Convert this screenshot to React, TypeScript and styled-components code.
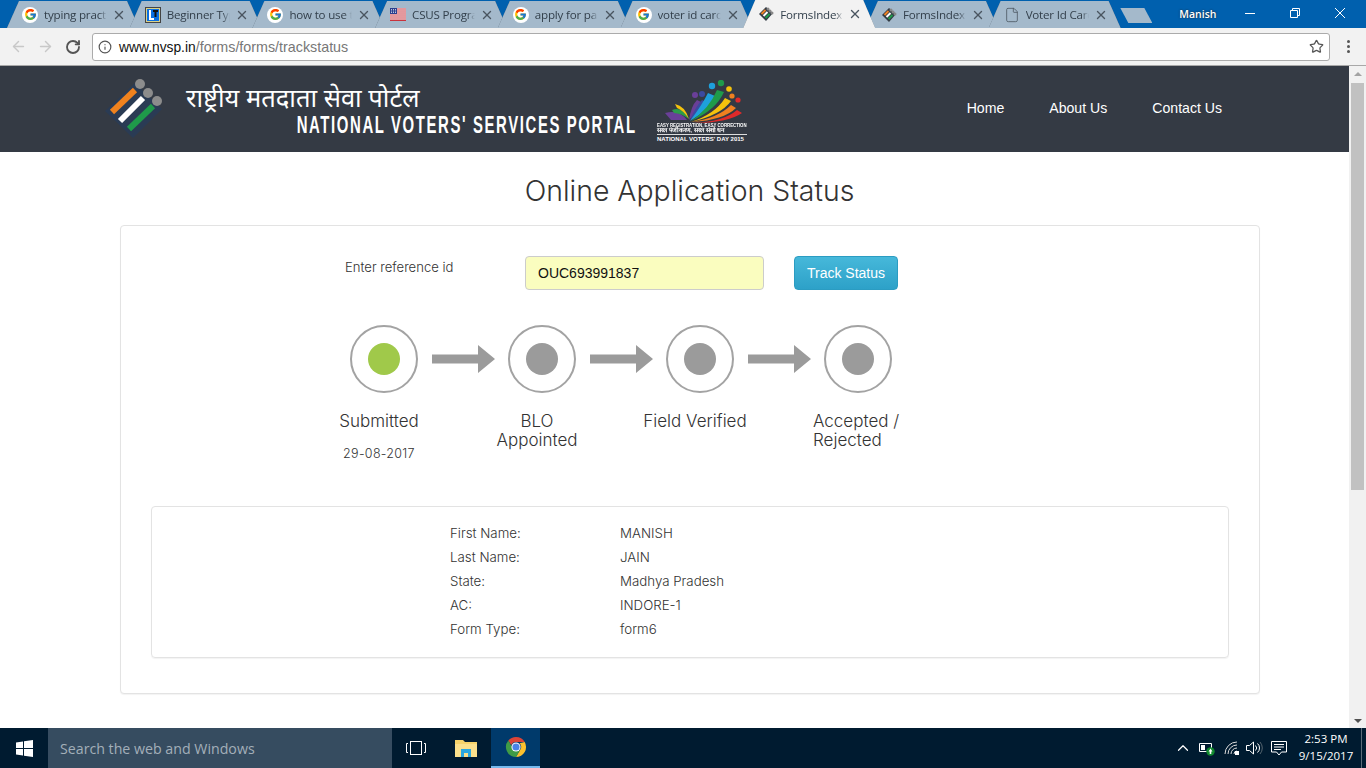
import { FcGoogle } from "react-icons/fc";
import { File, X, ArrowLeft, ArrowRight, RotateCw, Info, Star, ChevronUp } from "lucide-react";
import styled, { createGlobalStyle } from "styled-components";

const GlobalStyle = createGlobalStyle`
  html, body {
    margin: 0;
    padding: 0;
    height: 100%;
    overflow: hidden;
  }
  * { box-sizing: border-box; }
`;

const Screen = styled.div`
  display: flex;
  flex-direction: column;
  width: 1366px;
  height: 768px;
  font-family: "Open Sans", "Liberation Sans", sans-serif;
  background: #fff;
`;

const TabStrip = styled.div`
  display: flex;
  align-items: flex-end;
  height: 28px;
  padding-left: 7px;
  background: #0060ae;
  flex: none;
`;

const TabShell = styled.div<{ $active?: boolean }>`
  position: relative;
  z-index: ${(p) => (p.$active ? 2 : 1)};
  flex: none;
  width: 132px;
  margin-right: -9.3px;
  filter: drop-shadow(0 0 0.6px #51616f);
`;

const Tab = styled.div<{ $active?: boolean }>`
  display: flex;
  align-items: center;
  height: ${(p) => (p.$active ? "28px" : "27px")};
  padding: 0 13px 0 15px;
  background: ${(p) => (p.$active ? "#f2f2f2" : "#a4b9cb")};
  clip-path: polygon(12px 0, 120px 0, 132px 100%, 0 100%);
  color: #33404c;
`;

const TabIcon = styled.span`
  display: flex;
  align-items: center;
  justify-content: center;
  flex: none;
  width: 16px;
  height: 16px;
  margin-right: 6px;
`;

const GoogleBadge = styled(TabIcon)`
  background: #fff;
  border-radius: 50%;
`;

const TabTitle = styled.span`
  flex: 1;
  overflow: hidden;
  white-space: nowrap;
  font-size: 11.6px;
  letter-spacing: -0.2px;
  mask-image: linear-gradient(to right, #000 88%, transparent 100%);
`;

const TabClose = styled(X)`
  flex: none;
  margin-left: 5px;
  color: #4a5560;
`;

const NewTab = styled.div`
  width: 32px;
  height: 15px;
  margin: 0 0 5px 9px;
  background: #a4b9cb;
  clip-path: polygon(0 0, 24px 0, 32px 100%, 8px 100%);
  flex: none;
`;

const UserName = styled.div`
  width: 35px;
  margin-left: 27px;
  color: #fff;
  font-size: 10.5px;
  font-weight: 600;
  align-self: center;
  text-shadow: 0 0 2px #222;
  white-space: nowrap;
`;

const WindowButtons = styled.div`
  display: flex;
  align-items: center;
  margin-left: 31px;
  gap: 35px;
  align-self: center;
  margin-bottom: 2px;
  color: #fff;
`;

const Toolbar = styled.div`
  display: flex;
  align-items: center;
  flex: none;
  height: 38px;
  padding: 0 0 0 5px;
  background: #f2f2f2;
  border-bottom: 1px solid #a8a8a8;
`;

const NavIcon = styled.span<{ $dim?: boolean }>`
  display: flex;
  width: 27px;
  justify-content: center;
  color: ${(p) => (p.$dim ? "#c8c8c8" : "#555")};
`;

const Omnibox = styled.div`
  display: flex;
  align-items: center;
  width: 1238px;
  height: 28px;
  margin-left: 6px;
  padding: 0 5px 0 5px;
  background: #fff;
  border: 1px solid #ababab;
  border-radius: 3px;
`;

const Url = styled.span`
  flex: 1;
  margin-left: 7px;
  padding-top: 1px;
  color: #777;
  font-family: "Liberation Sans", Arial, sans-serif;
  font-size: 14.3px;
  b {
    font-weight: 400;
    font-size: 13.8px;
    color: #111;
  }
`;

const Kebab = styled.div`
  display: flex;
  flex-direction: column;
  gap: 2px;
  margin-left: 17px;
  i {
    width: 3px;
    height: 3px;
    background: #555;
    border-radius: 50%;
  }
`;

const Viewport = styled.div`
  display: flex;
  flex: 1;
  min-height: 0;
`;

const Page = styled.div`
  flex: 1;
  overflow: hidden;
  font-family: "Inter", "Liberation Sans", sans-serif;
  font-weight: 300;
  color: #333;
`;

const Scrollbar = styled.div`
  display: flex;
  flex-direction: column;
  align-items: center;
  width: 17px;
  padding: 6px 0 5px;
  background: #f1f1f1;
`;

const ScrollArrow = styled.div<{ $down?: boolean }>`
  width: 0;
  height: 0;
  border-left: 4px solid transparent;
  border-right: 4px solid transparent;
  ${(p) => (p.$down ? "border-top: 4px solid #505050;" : "border-bottom: 4px solid #a3a3a3;")}
`;

const ScrollThumb = styled.div`
  width: 13px;
  height: 407px;
  margin-top: 7px;
  background: #c1c1c1;
`;

const ScrollRest = styled.div`
  flex: 1;
`;

const SiteHeader = styled.header`
  display: flex;
  align-items: flex-start;
  height: 86px;
  padding: 8px 127px 0 104px;
  background: #343a44;
  color: #fff;
`;

const Brand = styled.div`
  display: flex;
  flex-direction: column;
  width: 449px;
  margin-left: 20px;
`;

const BrandHindi = styled.div`
  height: 33px;
  font-family: "Noto Sans", "Noto Sans Devanagari", "Liberation Sans", sans-serif;
  font-size: 25.5px;
  font-weight: 400;
  line-height: 46px;
  white-space: nowrap;
`;

const BrandEnglish = styled.div`
  align-self: flex-end;
  margin: 6px 0 0 0;
  font-family: "Liberation Sans", Arial, sans-serif;
  font-size: 23px;
  font-weight: 700;
  letter-spacing: 2.5px;
  line-height: 24px;
  white-space: nowrap;
  transform: translateX(2px) scaleX(0.648);
  transform-origin: right center;
`;

const DayLogo = styled.div`
  display: flex;
  flex-direction: column;
  width: 90px;
  margin: 6px 0 0 22px;
  font-family: "Liberation Sans", Arial, sans-serif;
  font-weight: 700;
  white-space: nowrap;
`;

const DayLine = styled.div<{ $squeeze: number }>`
  font-size: 6px;
  line-height: 5px;
  transform: scaleX(${(p) => p.$squeeze});
  transform-origin: left center;
`;

const DayRule = styled.div`
  height: 1px;
  margin: 1px 0 2px;
  background: #ddd;
`;

const HeaderNav = styled.nav`
  display: flex;
  gap: 45px;
  margin: 26px 0 0 auto;
  font-family: "Liberation Sans", Arial, sans-serif;
  font-size: 14.1px;
  font-weight: 400;
  line-height: 17px;
`;

const Heading = styled.h1`
  margin: 22px 0 17px;
  padding-left: 30px;
  text-align: center;
  font-size: 28.4px;
  font-weight: 300;
  line-height: 34px;
  height: 34px;
  color: #333;
`;

const Card = styled.section`
  width: 1140px;
  height: 469px;
  margin-left: 120px;
  padding: 30px 30px 0;
  background: #fff;
  border: 1px solid #e3e3e3;
  border-radius: 4px;
  box-shadow: 0 1px 1px rgba(0, 0, 0, 0.05);
`;

const TrackForm = styled.div`
  display: flex;
  align-items: flex-start;
  height: 34px;
  padding-left: 194px;
`;

const RefLabel = styled.label`
  width: 180px;
  padding-top: 3px;
  font-size: 13.1px;
  line-height: 16px;
  font-weight: 300;
`;

const RefInput = styled.input`
  width: 239px;
  height: 34px;
  padding: 0 12px;
  background: #fafdbf;
  border: 1px solid #ccc;
  border-radius: 4px;
  font-family: "Liberation Sans", Arial, sans-serif;
  font-size: 14px;
  color: #111;
`;

const TrackButton = styled.button`
  width: 104px;
  height: 34px;
  margin-left: 30px;
  background: linear-gradient(#46b8da, #2da1c8);
  border: 1px solid #2b9cc2;
  border-radius: 4px;
  font-family: "Liberation Sans", Arial, sans-serif;
  font-size: 14px;
  color: #fff;
`;

const Progress = styled.div`
  display: flex;
  align-items: center;
  margin: 35px 0 0 199px;
`;

const Ring = styled.div`
  display: flex;
  align-items: center;
  justify-content: center;
  flex: none;
  width: 68px;
  height: 68px;
  border: 2px solid #a3a3a3;
  border-radius: 50%;
`;

const Dot = styled.div<{ $done?: boolean }>`
  width: 32px;
  height: 32px;
  border-radius: 50%;
  background: ${(p) => (p.$done ? "#a0c94a" : "#9b9b9b")};
`;

const ArrowSlot = styled.div`
  display: flex;
  flex: none;
  width: 90px;
  padding-left: 14px;
`;

const StepLabels = styled.div`
  display: grid;
  grid-template-columns: repeat(4, 158px);
  height: 94px;
  margin: 19px 0 0 149px;
`;

const StepLabel = styled.div<{ $left?: boolean }>`
  padding-left: ${(p) => (p.$left ? "39px" : "0")};
  text-align: ${(p) => (p.$left ? "left" : "center")};
  font-size: 17px;
  font-weight: 300;
  line-height: 19px;
`;

const StepDate = styled.div`
  margin-top: 15px;
  font-size: 12.5px;
  letter-spacing: 0.3px;
  line-height: 16px;
`;

const DetailPanel = styled.div`
  width: 1078px;
  height: 152px;
  padding: 14px 0 0 298px;
  border: 1px solid #e3e3e3;
  border-radius: 4px;
  box-shadow: 0 1px 1px rgba(0, 0, 0, 0.05);
`;

const DetailRow = styled.div`
  display: grid;
  grid-template-columns: 170px 1fr;
  font-size: 13.3px;
  font-weight: 300;
  line-height: 24px;
`;

const Taskbar = styled.div`
  display: flex;
  align-items: stretch;
  flex: none;
  height: 40px;
  background: #001b30;
  color: #fff;
  font-family: "Open Sans", "Liberation Sans", sans-serif;
`;

const StartButton = styled.div`
  display: flex;
  align-items: center;
  justify-content: center;
  width: 48px;
`;

const SearchBox = styled.div`
  display: flex;
  align-items: center;
  width: 344px;
  padding-left: 12px;
  background: #364c60;
  color: #a3afb9;
  font-size: 14.2px;
`;

const TaskSlot = styled.div<{ $active?: boolean; $w: number }>`
  display: flex;
  align-items: center;
  justify-content: center;
  width: ${(p) => p.$w}px;
  background: ${(p) => (p.$active ? "#003a6b" : "transparent")};
  border-bottom: ${(p) => (p.$active ? "2px solid #76b9ed" : "none")};
`;

const Tray = styled.div`
  display: flex;
  align-items: stretch;
  margin-left: auto;
`;

const TraySlot = styled.div<{ $w: number }>`
  display: flex;
  align-items: center;
  justify-content: center;
  width: ${(p) => p.$w}px;
`;

const Clock = styled(TraySlot)`
  margin-right: 3px;
  padding-bottom: 2px;
  text-align: center;
  font-size: 11.5px;
  line-height: 17px;
  white-space: nowrap;
`;

const ShowDesktop = styled.div`
  width: 5px;
  border-left: 1px solid #5b6b78;
`;

const GoogleIcon = () => (
  <GoogleBadge>
    <FcGoogle size={13} />
  </GoogleBadge>
);

const VoterIcon = () => (
  <TabIcon>
    <svg width="16" height="16" viewBox="0 0 16 16">
      <path d="M8 1l7 6-7 8-7-7z" fill="#333b44" />
      <path d="M3.5 8l4-4" stroke="#ee8122" strokeWidth="2" />
      <path d="M5.5 10l4-4" stroke="#fff" strokeWidth="2" />
      <path d="M7.5 12l4-4" stroke="#1f9a4a" strokeWidth="2" />
      <circle cx="10" cy="3" r="1.5" fill="#888" />
      <circle cx="12" cy="5" r="1.5" fill="#888" />
      <circle cx="14" cy="7" r="1.5" fill="#888" />
    </svg>
  </TabIcon>
);

const TypingIcon = () => (
  <TabIcon>
    <svg width="16" height="16" viewBox="0 0 16 16">
      <rect x="0.5" y="0.5" width="15" height="15" fill="#d9d28a" stroke="#444" />
      <rect x="2" y="2" width="12" height="12" fill="#0a6fe0" />
      <path d="M4 3h2v8h3v2H4z" fill="#fff" />
      <path d="M8 3h5v2h-1.5v5H9.5V5H8z" fill="#111" />
    </svg>
  </TabIcon>
);

const FlagIcon = () => (
  <TabIcon>
    <svg width="16" height="13" viewBox="0 0 16 13">
      <rect width="16" height="13" fill="#fff" />
      <path d="M0 1h16M0 3h16M0 5h16M0 7h16M0 9h16M0 11h16M0 12.5h16" stroke="#c8323c" strokeWidth="1" />
      <rect width="7" height="6" fill="#2b3f8f" />
      <path d="M1 1.5h5M1 3h5M1 4.5h5" stroke="#fff" strokeWidth="0.7" strokeDasharray="1 1" />
    </svg>
  </TabIcon>
);

const DocIcon = () => (
  <TabIcon>
    <File size={16} strokeWidth={1.2} color="#4a5560" />
  </TabIcon>
);

const tabs = [
  { icon: <GoogleIcon />, title: "typing practice test" },
  { icon: <TypingIcon />, title: "Beginner Typing" },
  { icon: <GoogleIcon />, title: "how to use the" },
  { icon: <FlagIcon />, title: "CSUS Program" },
  { icon: <GoogleIcon />, title: "apply for pan" },
  { icon: <GoogleIcon />, title: "voter id card" },
  { icon: <VoterIcon />, title: "FormsIndex", active: true },
  { icon: <VoterIcon />, title: "FormsIndex" },
  { icon: <DocIcon />, title: "Voter Id Card" },
];

const details = [
  ["First Name:", "MANISH"],
  ["Last Name:", "JAIN"],
  ["State:", "Madhya Pradesh"],
  ["AC:", "INDORE-1"],
  ["Form Type:", "form6"],
];

const BallotLogo = () => (
  <svg width="62" height="64" viewBox="0 0 62 64">
    <path d="M1 37l30-28 27 26-29 29z" fill="#2a3b54" />
    <circle cx="36" cy="10" r="5" fill="#8c8c8c" />
    <circle cx="44" cy="19" r="5" fill="#8c8c8c" />
    <circle cx="53" cy="27" r="5" fill="#8c8c8c" />
    <path d="M8 38l23-22" stroke="#f0821e" strokeWidth="6" />
    <path d="M16 47l23-23" stroke="#fff" strokeWidth="6" />
    <path d="M25 55l24-23" stroke="#1f9a4a" strokeWidth="6" />
  </svg>
);

const Swoosh = () => (
  <svg width="90" height="43" viewBox="0 0 90 43">
    <path d="M8 33q14-4 22 7H14z" fill="#6a3f98" />
    <path d="M15 30q10-4 17 9-8-6-15-6z" fill="#2d9a4a" />
    <path d="M18 24q10 2 14 15-6-9-12-11z" fill="#f4c20d" />
    <path d="M32 40q2-14 8-20l4 2q-4 10-12 18z" fill="#6a3f98" />
    <path d="M33 40q6-14 12-20l4 2q-4 12-16 18z" fill="#3b4aa0" />
    <path d="M33 41q12-16 18-28l7 3q-6 14-25 25z" fill="#1ea0dc" />
    <path d="M34 41q18-12 26-31l7 2q-8 18-33 29z" fill="#1f9a4a" />
    <path d="M34 42q24-8 34-24l6 3q-10 14-40 21z" fill="#f4c20d" />
    <path d="M35 42q26-4 39-17l5 3q-12 12-44 14z" fill="#f08020" />
    <path d="M36 43q30-1 44-13l5 3q-14 10-49 10z" fill="#e02a2a" />
    <circle cx="38" cy="15" r="3" fill="#6a3f98" />
    <circle cx="45" cy="14" r="3" fill="#3b4aa0" />
    <circle cx="55" cy="6" r="3.2" fill="#1ea0dc" />
    <circle cx="64" cy="3" r="3.2" fill="#1f9a4a" />
    <circle cx="72" cy="9" r="2.8" fill="#f4c20d" />
    <circle cx="75" cy="16" r="2.6" fill="#f08020" />
    <circle cx="81" cy="20" r="2.6" fill="#e02a2a" />
  </svg>
);

const StepArrow = () => (
  <svg width="63" height="28" viewBox="0 0 63 28">
    <path d="M0 9.5h46V0l17 14-17 14v-9.5H0z" fill="#9b9b9b" />
  </svg>
);

const ChromeIcon = () => (
  <svg width="22" height="22" viewBox="0 0 24 24">
    <path d="M12 1a11 11 0 0 1 9.5 5.5H12a5.5 5.5 0 0 0-5.2 3.6L3.6 5A11 11 0 0 1 12 1z" fill="#db4437" />
    <path d="M21.5 6.5A11 11 0 0 1 12 23l4.7-8.2A5.5 5.5 0 0 0 16 8z" fill="#fbc02d" />
    <path d="M3.6 5l4.8 8.3A5 5 0 0 0 16.5 15L12 23A11 11 0 0 1 3.6 5z" fill="#3f9b46" />
    <circle cx="12" cy="12" r="5" fill="#fff" />
    <circle cx="12" cy="12" r="3.9" fill="#4a84e8" />
  </svg>
);

export default function App() {
  return (
    <Screen>
      <GlobalStyle />
      <TabStrip>
        {tabs.map((t, i) => (
          <TabShell key={i} $active={t.active}>
            <Tab $active={t.active}>
              {t.icon}
              <TabTitle>{t.title}</TabTitle>
              <TabClose size={14} strokeWidth={2.4} />
            </Tab>
          </TabShell>
        ))}
        <NewTab />
        <UserName>Manish</UserName>
        <WindowButtons>
          <svg width="10" height="10" viewBox="0 0 10 10">
            <path d="M0 5.5h10" stroke="#fff" />
          </svg>
          <svg width="10" height="10" viewBox="0 0 10 10" fill="none" stroke="#fff">
            <path d="M.5 2.5h7v7h-7zM2.5 2.5v-2h7v7h-2" />
          </svg>
          <svg width="10" height="10" viewBox="0 0 10 10">
            <path d="M0 0l10 10M10 0L0 10" stroke="#fff" />
          </svg>
        </WindowButtons>
      </TabStrip>
      <Toolbar>
        <NavIcon $dim>
          <ArrowLeft size={17} />
        </NavIcon>
        <NavIcon $dim>
          <ArrowRight size={17} />
        </NavIcon>
        <NavIcon>
          <RotateCw size={16} strokeWidth={2.8} />
        </NavIcon>
        <Omnibox>
          <Info size={14} color="#555" strokeWidth={2} />
          <Url>
            <b>www.nvsp.in</b>/forms/forms/trackstatus
          </Url>
          <Star size={15} color="#555" strokeWidth={2} />
        </Omnibox>
        <Kebab>
          <i />
          <i />
          <i />
        </Kebab>
      </Toolbar>
      <Viewport>
        <Page>
          <SiteHeader>
            <BallotLogo />
            <Brand>
              <BrandHindi lang="hi">राष्ट्रीय मतदाता सेवा पोर्टल</BrandHindi>
              <BrandEnglish>NATIONAL VOTERS' SERVICES PORTAL</BrandEnglish>
            </Brand>
            <DayLogo>
              <Swoosh />
              <DayLine $squeeze={0.72}>EASY REGISTRATION, EASY CORRECTION</DayLine>
              <DayLine lang="hi" $squeeze={1.05}>सरल पंजीकरण, सरल संशोधन</DayLine>
              <DayRule />
              <DayLine $squeeze={1}>NATIONAL VOTERS' DAY 2015</DayLine>
            </DayLogo>
            <HeaderNav>
              <span>Home</span>
              <span>About Us</span>
              <span>Contact Us</span>
            </HeaderNav>
          </SiteHeader>
          <Heading>Online Application Status</Heading>
          <Card>
            <TrackForm>
              <RefLabel>Enter reference id</RefLabel>
              <RefInput defaultValue="OUC693991837" />
              <TrackButton>Track Status</TrackButton>
            </TrackForm>
            <Progress>
              <Ring>
                <Dot $done />
              </Ring>
              <ArrowSlot>
                <StepArrow />
              </ArrowSlot>
              <Ring>
                <Dot />
              </Ring>
              <ArrowSlot>
                <StepArrow />
              </ArrowSlot>
              <Ring>
                <Dot />
              </Ring>
              <ArrowSlot>
                <StepArrow />
              </ArrowSlot>
              <Ring>
                <Dot />
              </Ring>
            </Progress>
            <StepLabels>
              <StepLabel>
                Submitted
                <StepDate>29-08-2017</StepDate>
              </StepLabel>
              <StepLabel>
                BLO
                <br />
                Appointed
              </StepLabel>
              <StepLabel>Field Verified</StepLabel>
              <StepLabel $left>
                Accepted /
                <br />
                Rejected
              </StepLabel>
            </StepLabels>
            <DetailPanel>
              {details.map(([k, v]) => (
                <DetailRow key={k}>
                  <span>{k}</span>
                  <span>{v}</span>
                </DetailRow>
              ))}
            </DetailPanel>
          </Card>
        </Page>
        <Scrollbar>
          <ScrollArrow />
          <ScrollThumb />
          <ScrollRest />
          <ScrollArrow $down />
        </Scrollbar>
      </Viewport>
      <Taskbar>
        <StartButton>
          <svg width="17" height="17" viewBox="0 0 17 17">
            <path d="M0 2.5l7-1v6.5H0zM8 1.3L17 0v8H8zM0 9h7v6.5l-7-1zM8 9h9v8l-9-1.3z" fill="#fff" />
          </svg>
        </StartButton>
        <SearchBox>Search the web and Windows</SearchBox>
        <TaskSlot $w={48}>
          <svg width="20" height="14" viewBox="0 0 20 14" fill="none" stroke="#fff">
            <rect x="4.5" y="0.5" width="11" height="13" />
            <path d="M2 2.5H.5v9H2M18 2.5h1.5v9H18" />
          </svg>
        </TaskSlot>
        <TaskSlot $w={51}>
          <svg width="22" height="18" viewBox="0 0 22 18">
            <path d="M0 1h8l2 2h12v15H0z" fill="#f6d36b" />
            <path d="M0 5h22v13H0z" fill="#fbe08c" />
            <path d="M6 10h10v8h-3v-4H9v4H6z" fill="#2aa7e0" />
          </svg>
        </TaskSlot>
        <TaskSlot $w={49} $active>
          <ChromeIcon />
        </TaskSlot>
        <Tray>
          <TraySlot $w={24}>
            <ChevronUp size={18} strokeWidth={1.6} />
          </TraySlot>
          <TraySlot $w={24}>
            <svg width="16" height="15" viewBox="0 0 16 15">
              <path d="M.5 2.5h12v8H.5z" fill="none" stroke="#fff" />
              <path d="M2 4h4v5H2z" fill="#fff" />
              <circle cx="11.5" cy="10.5" r="4.2" fill="#118a2e" />
              <path d="M11.5 7.5l2 3h-1.200v2.500h-1.600v-2.500H9.500z" fill="#fff" />
            </svg>
          </TraySlot>
          <TraySlot $w={26}>
            <svg width="16" height="14" viewBox="0 0 16 14" fill="none" stroke="#ddd">
              <path d="M1 13A12 12 0 0 1 13 1M4 13a9 9 0 0 1 9-9M7 13a6 6 0 0 1 6-6M10 13a3 3 0 0 1 3-3" />
              <rect x="11" y="10" width="4" height="4" fill="#fff" stroke="none" />
            </svg>
          </TraySlot>
          <TraySlot $w={19}>
            <svg width="17" height="14" viewBox="0 0 17 14" fill="none" stroke="#fff">
              <path d="M.5 4.5h3l4-3.500v12l-4-3.500h-3z" />
              <path d="M9.500 4.500a3.500 3.500 0 0 1 0 5M11.500 2.500a6 6 0 0 1 0 9" />
              <path d="M14 1a9 9 0 0 1 0 12" stroke="#56656f" />
            </svg>
          </TraySlot>
          <TraySlot $w={30}>
            <svg width="16" height="15" viewBox="0 0 16 15" fill="none" stroke="#fff">
              <path d="M.5.500h15v10.500h-5L8 14l-2.500-3h-5z" />
              <path d="M3 3.500h10M3 6h10M3 8.500h7" />
            </svg>
          </TraySlot>
          <Clock $w={64}>
            2:53 PM
            <br />
            9/15/2017
          </Clock>
          <ShowDesktop />
        </Tray>
      </Taskbar>
    </Screen>
  );
}
